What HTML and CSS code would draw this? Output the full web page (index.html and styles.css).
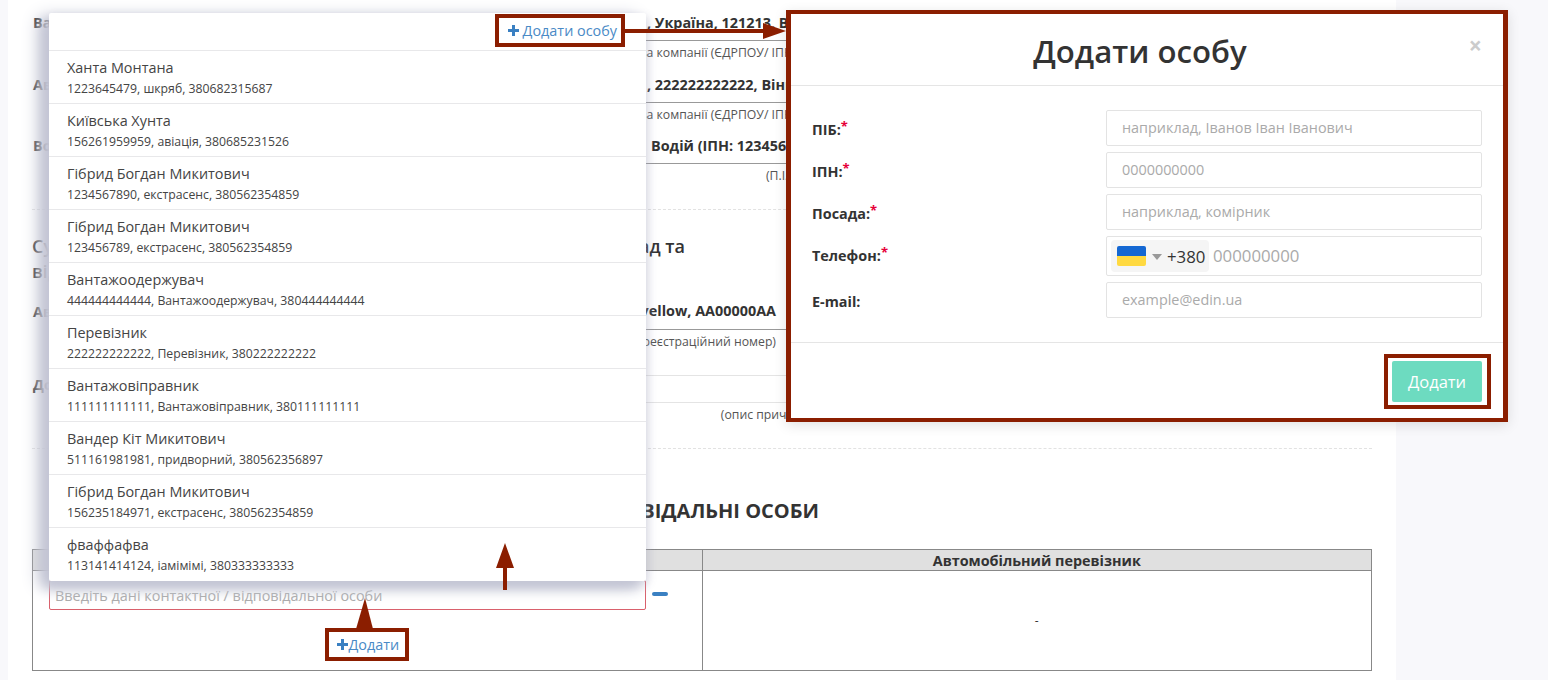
FILE: index.html
```html
<!DOCTYPE html>
<html lang="uk">
<head>
<meta charset="UTF-8">
<title>Додати особу</title>
<link rel="stylesheet" href="styles.css">
</head>
<body>
<div class="sheet">
  <div class="field">
    <div class="field-label">Вантажовідправник:</div>
    <div class="field-value">, Україна, 121213, Вінницька обл.</div>
    <div class="field-hint"><span class="hint-text">назва компанії (ЄДРПОУ/ ІПН), адреса</span></div>
  </div>
  <div class="field field-tight">
    <div class="field-label">Автомобільний перевізник:</div>
    <div class="field-value">, 222222222222, Вінниця</div>
    <div class="field-hint"><span class="hint-text">назва компанії (ЄДРПОУ/ ІПН), адреса</span></div>
  </div>
  <div class="field">
    <div class="field-label">Водій:</div>
    <div class="field-value field-value-driver">Водій (ІПН: 1234567890)</div>
    <div class="field-hint hint-center">(П.І.Б. водія, посвідчення)</div>
  </div>

  <div class="sep sep-first"></div>

  <div class="section-title">
    <div class="title-line"><span>Супровідні документи</span><span>склад та</span></div>
    <div>відомості про вантаж</div>
  </div>

  <div class="field field-car">
    <div class="field-label">Автомобіль:</div>
    <div class="field-value field-value-end">Renault Kangoo, yellow, AA00000AA</div>
    <div class="field-hint hint-end">(марка, модель, колір, реєстраційний номер)</div>
  </div>

  <div class="field-note">
    <div class="field-label">Додатково:</div>
    <div class="note-box"></div>
    <div class="field-hint hint-reason">(опис причини внесення змін до запису)</div>
  </div>

  <div class="sep"></div>

  <h2 class="persons-title">ВІДПОВІДАЛЬНІ ОСОБИ</h2>

  <table class="persons">
    <tr>
      <th>Вантажовідправник</th>
      <th>Автомобільний перевізник</th>
    </tr>
    <tr>
      <td class="persons-cell">
        <div class="person-input">
          <input class="person-search" placeholder="Введіть дані контактної / відповідальної особи">
          <span class="minus"></span>
        </div>
        <div class="add-wrap">
          <a class="mark add-link" href="#"><svg class="plus" viewBox="0 0 11 11"><path d="M4 0h3v4h4v3H7v4H4V7H0V4h4z"/></svg>Додати</a>
        </div>
      </td>
      <td class="empty-cell">-</td>
    </tr>
  </table>
</div>

<div class="popup">
  <div class="popup-head">
    <a class="mark popup-add" href="#"><svg class="plus plus-gap" viewBox="0 0 11 11"><path d="M4 0h3v4h4v3H7v4H4V7H0V4h4z"/></svg>Додати особу</a>
  </div>
  <div class="person"><div class="person-name">Ханта Монтана</div><div class="person-info">1223645479, шкряб, 380682315687</div></div>
  <div class="person"><div class="person-name">Київська Хунта</div><div class="person-info">156261959959, авіація, 380685231526</div></div>
  <div class="person"><div class="person-name">Гібрид Богдан Микитович</div><div class="person-info">1234567890, екстрасенс, 380562354859</div></div>
  <div class="person"><div class="person-name">Гібрид Богдан Микитович</div><div class="person-info">123456789, екстрасенс, 380562354859</div></div>
  <div class="person"><div class="person-name">Вантажоодержувач</div><div class="person-info">444444444444, Вантажоодержувач, 380444444444</div></div>
  <div class="person"><div class="person-name">Перевізник</div><div class="person-info">222222222222, Перевізник, 380222222222</div></div>
  <div class="person"><div class="person-name">Вантажовіправник</div><div class="person-info">111111111111, Вантажовіправник, 380111111111</div></div>
  <div class="person"><div class="person-name">Вандер Кіт Микитович</div><div class="person-info">511161981981, придворний, 380562356897</div></div>
  <div class="person"><div class="person-name">Гібрид Богдан Микитович</div><div class="person-info">156235184971, екстрасенс, 380562354859</div></div>
  <div class="person person-last"><div class="person-name">фваффафва</div><div class="person-info">113141414124, іамімімі, 380333333333</div></div>
</div>

<div class="modal">
  <div class="modal-head">
    <h1 class="modal-title">Додати особу</h1>
    <span class="close">×</span>
  </div>
  <div class="modal-body">
    <label class="form-label">ПІБ:<span class="req">*</span></label>
    <input class="form-input" placeholder="наприклад, Іванов Іван Іванович">
    <label class="form-label">ІПН:<span class="req">*</span></label>
    <input class="form-input" placeholder="0000000000">
    <label class="form-label">Посада:<span class="req">*</span></label>
    <input class="form-input" placeholder="наприклад, комірник">
    <label class="form-label label-phone">Телефон:<span class="req">*</span></label>
    <div class="phone">
      <div class="phone-code">
        <svg class="flag" viewBox="0 0 29 20"><rect width="29" height="10" fill="#1467d2"/><rect y="10" width="29" height="10" fill="#ffd940"/></svg>
        <span class="caret"></span>
        <span class="phone-prefix">+380</span>
      </div>
      <input class="phone-input" placeholder="000000000">
    </div>
    <label class="form-label">E-mail:</label>
    <input class="form-input" placeholder="example@edin.ua">
  </div>
  <div class="modal-foot">
    <div class="mark mark-btn"><button class="btn-add">Додати</button></div>
  </div>
</div>

<svg class="arrows" width="1548" height="680" viewBox="0 0 1548 680">
  <path d="M625 29h138v-6l23 8-23 8v-6H625z"/>
  <path d="M503 590v-22h-7l9-25 9 25h-7v22z"/>
  <path d="M356 629l9-31 8 31z"/>
</svg>
</body>
</html>
```

FILE: styles.css
```css
* {
  box-sizing: border-box;
}
html, body {
  height: 100%;
}
body {
  margin: 0;
  overflow: hidden;
  background: #f8f8fb;
  font-family: "Open Sans", "Noto Sans", sans-serif;
  font-size: 14.4px;
  color: #333;
}
a {
  color: #4a8ac6;
  text-decoration: none;
}
input {
  font-family: inherit;
  outline: none;
}
input::placeholder {
  color: #aaa;
  opacity: 1;
}

/* page behind the overlays */
.sheet {
  width: 1388px;
  min-height: 100%;
  margin-left: 8px;
  padding: 0 24px;
  background: #fff;
}
.field {
  display: grid;
  grid-template-columns: 280px 1fr;
  grid-template-rows: 41px 21px;
  height: 62px;
}
.field-tight {
  height: 61px;
}
.field-label {
  padding-top: 13px;
  padding-left: 1px;
  line-height: 20px;
  font-weight: 700;
  white-space: nowrap;
}
.field-value {
  padding: 13px 0 0 335px;
  line-height: 20px;
  font-weight: 700;
  white-space: nowrap;
  border-bottom: 1px solid #999;
}
.field-value-driver {
  padding-left: 339px;
}
.field-value-end {
  padding: 12px 596px 0 0;
  text-align: right;
}
.field-hint {
  grid-column: 2;
  font-size: 12.25px;
  line-height: 24px;
  color: #555;
  white-space: nowrap;
}
.hint-text {
  margin-left: 307px;
}
.hint-center {
  text-align: center;
}
.hint-end {
  padding-right: 596px;
  text-align: right;
}
.hint-reason {
  text-align: center;
}
.sep {
  margin-top: 23px;
  border-top: 1px dashed #e2e2e2;
}
.sep-first {
  margin-top: 24px;
}
.section-title {
  margin-top: 24px;
  font-size: 18px;
  font-weight: 600;
  line-height: 25px;
}
.title-line {
  display: flex;
  justify-content: space-between;
  width: 653px;
}
.field-car {
  margin-top: 5px;
}
.field-note {
  display: grid;
  grid-template-columns: 280px 1fr;
  grid-template-rows: 28px 22px;
  margin-top: 24px;
}
.field-note .field-label {
  padding-top: 0;
}
.note-box {
  border-top: 1px solid #e4e4e4;
  border-bottom: 1px solid #e4e4e4;
}
.persons-title {
  width: 787px;
  margin: 48px 0 24px;
  font-size: 20px;
  line-height: 28px;
  font-weight: 700;
  text-align: right;
}
.persons {
  width: 100%;
  table-layout: fixed;
  border-collapse: collapse;
}
.persons th, .persons td {
  border: 1px solid #888;
  padding: 0;
}
.persons th {
  height: 21px;
  background: #e0e0e0;
  font-size: 14.4px;
  line-height: 19px;
}
.persons-cell {
  height: 100px;
  padding: 9px 0 9px 16px !important;
}
.person-input {
  display: flex;
  align-items: flex-start;
}
.person-search {
  width: 597px;
  height: 30px;
  padding: 0 5px;
  font-size: 14.4px;
  border: 1px solid #d9606c;
  border-radius: 2px;
}
.minus {
  width: 16px;
  height: 4px;
  margin: 12px 0 0 6px;
  background: #3a80c2;
  border-radius: 2px;
}
.add-wrap {
  display: flex;
  justify-content: center;
  margin: 18px 0 0 -16px;
}
.empty-cell {
  text-align: center;
  font-size: 12px;
}

/* red annotation frames */
.mark {
  border: 4px solid #8b1e00;
  background: #fff;
}
.add-link {
  display: flex;
  align-items: center;
  height: 33px;
  padding: 0 6px 0 8px;
}
.plus {
  flex: none;
  width: 11px;
  height: 11px;
  fill: #3a80c2;
}
.plus-gap {
  margin-right: 4px;
}

/* person dropdown */
.popup {
  position: absolute;
  left: 49px;
  top: 13px;
  width: 597px;
  background: #fff;
  border-radius: 2px;
  box-shadow: -10px 4px 18px #c3c5d4, -6px 7px 12px #c3c5d4, 3px 3px 8px rgba(85, 90, 135, 0.15);
}
.popup-head {
  display: flex;
  justify-content: flex-end;
  height: 37px;
  padding: 1px 21px 0 0;
}
.popup-add {
  display: flex;
  align-items: center;
  height: 33px;
  padding: 0 4px 0 9px;
}
.person {
  height: 53px;
  padding: 7px 18px 0;
  border-top: 1px solid #e8e8ea;
  color: #444;
}
.person-last {
  height: 54px;
}
.person-name {
  line-height: 20px;
}
.person-info {
  margin-top: 1px;
  font-size: 12.25px;
  line-height: 20px;
}

/* add person dialog */
.modal {
  position: absolute;
  left: 786px;
  top: 10px;
  width: 722px;
  height: 412px;
  background: #fff;
  border: solid #8b1e00;
  border-width: 4px 5px;
  box-shadow: 0 3px 12px rgba(0, 0, 0, 0.12);
}
.modal-head {
  position: relative;
  height: 72px;
  border-bottom: 1px solid #e5e5e5;
}
.modal-title {
  margin: 0;
  padding-right: 14px;
  font-size: 31.2px;
  line-height: 74px;
  font-weight: 600;
  text-align: center;
}
.close {
  position: absolute;
  top: 17px;
  right: 21px;
  font-size: 23px;
  line-height: 28px;
  font-weight: 700;
  color: #ccc;
}
.modal-body {
  display: grid;
  grid-template-columns: 294px 376px;
  grid-template-rows: 36px 36px 36px 40px 36px;
  row-gap: 6px;
  align-items: center;
  padding: 24px 0 24px 21px;
  border-bottom: 1px solid #e5e5e5;
}
.form-label {
  padding-top: 2px;
  font-weight: 700;
}
.label-phone {
  padding: 0 0 2px;
}
.req {
  position: relative;
  top: -4px;
  line-height: 0;
  font-size: 13px;
  color: #e60039;
}
.form-input {
  width: 100%;
  height: 36px;
  padding: 0 15px 2px;
  font-size: 14.4px;
  border: 1px solid #e3e3e3;
  border-radius: 2px;
}
.phone {
  display: flex;
  align-items: center;
  height: 40px;
  padding-left: 4px;
  border: 1px solid #e3e3e3;
  border-radius: 2px;
}
.phone-code {
  display: flex;
  align-items: center;
  flex: none;
  width: 98px;
  height: 32px;
  padding-left: 6px;
  font-size: 16.8px;
  background: #f5f5f5;
  border-radius: 4px;
}
.phone-prefix {
  padding-top: 1px;
}
.flag {
  width: 29px;
  height: 20px;
  border-radius: 2px;
}
.caret {
  width: 0;
  height: 0;
  margin: 1px 5px 0 6px;
  border-top: 6px solid #999;
  border-left: 5px solid transparent;
  border-right: 5px solid transparent;
}
.phone-input {
  flex: 1;
  min-width: 0;
  padding: 0 0 2px 4px;
  font-size: 16.8px;
  border: 0;
}
.modal-foot {
  display: flex;
  justify-content: flex-end;
  padding: 11px 12px 0 0;
}
.mark-btn {
  padding: 3px 5px 3px 4px;
}
.btn-add {
  display: block;
  width: 90px;
  height: 41px;
  font-family: inherit;
  font-size: 16.5px;
  color: #fff;
  background: #6ddbc0;
  border: 0;
  border-radius: 2px;
}

/* arrows drawn on top of the screenshot */
.arrows {
  position: absolute;
  left: 0;
  top: 0;
  fill: #8b1e00;
  pointer-events: none;
}
```
